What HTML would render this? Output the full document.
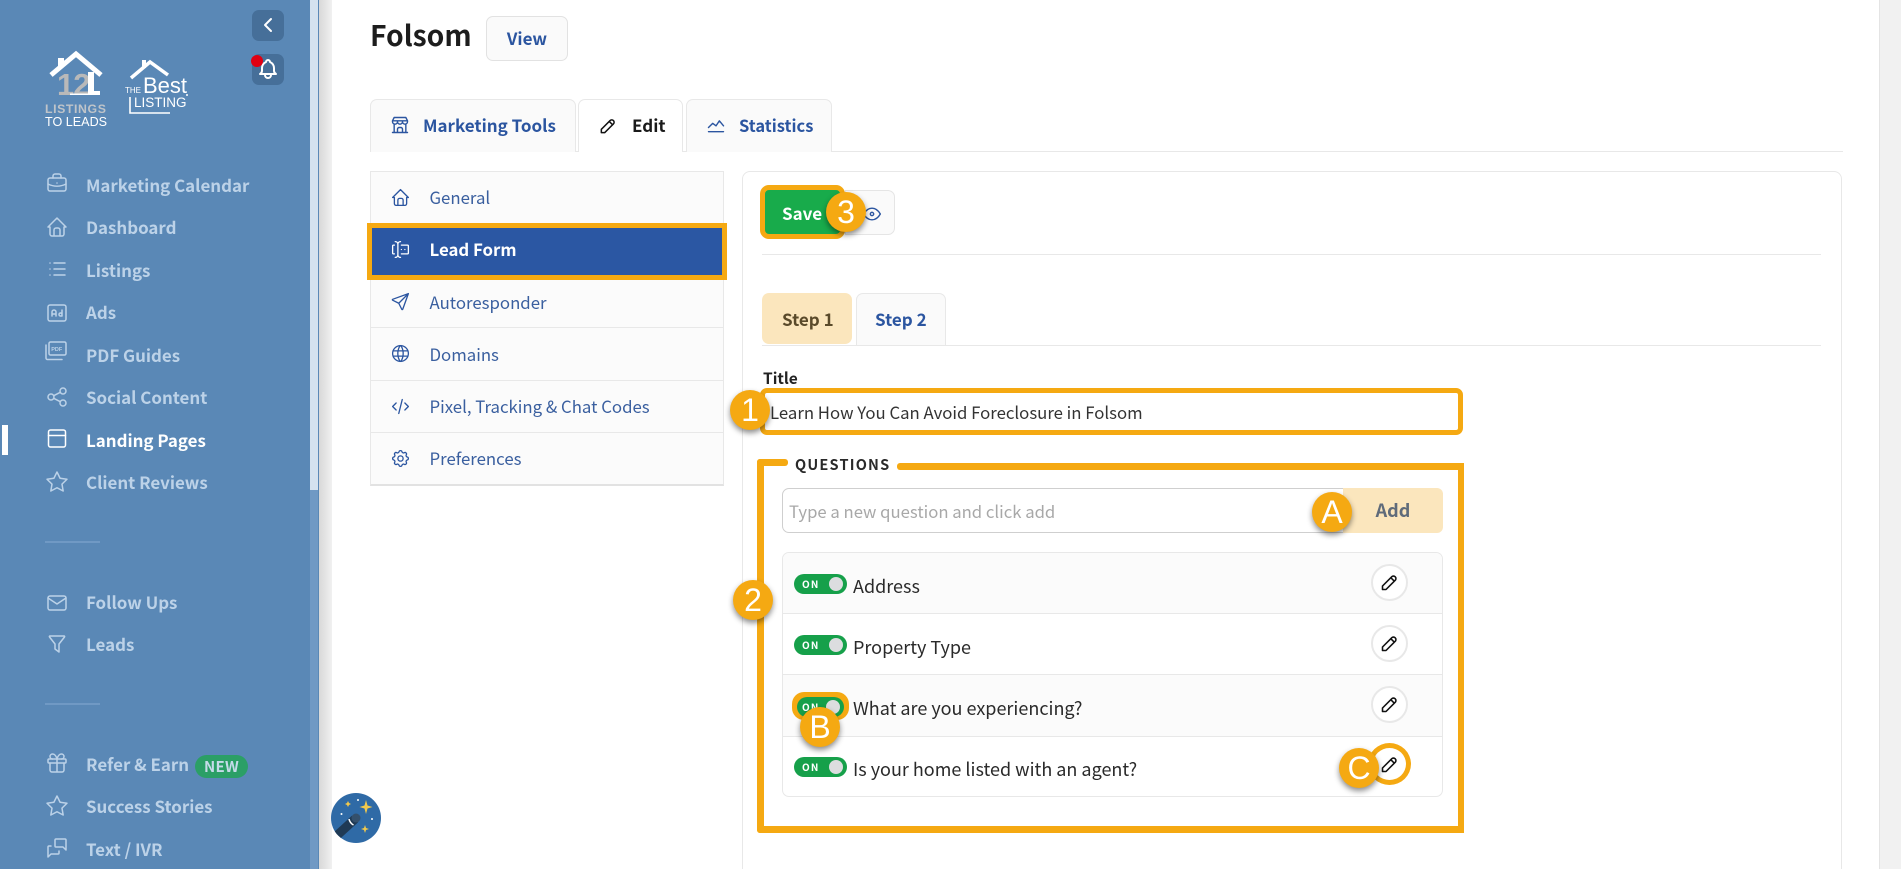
<!DOCTYPE html>
<html lang="en"><head><meta charset="utf-8"><title>Folsom</title>
<style>
html,body{margin:0;padding:0;width:1901px;height:869px;overflow:hidden;background:#fff}
body{position:relative;font-family:"Noto Sans CJK JP","Liberation Sans",sans-serif;color:#222}
div,span.a,svg.i{position:absolute;box-sizing:border-box}
.t{position:absolute;white-space:nowrap;line-height:24px;height:24px}
svg.i{fill:none;stroke:currentColor;stroke-width:1.5;stroke-linecap:round;stroke-linejoin:round}
.s{left:86px;font-size:16.9px;font-weight:700;color:#bcd2e8}
.si{left:45px;width:24px;height:24px;color:#bcd2e8}
.m{left:429.5px;font-size:16.8px;color:#3a5f9f}
.mi{left:390px;width:21px;height:21px;color:#2b55a0}
.line{background:#e8e8e8;height:1px}
.tab{background:#fafafa;border:1px solid #e8e8e8;border-bottom:0;border-radius:7px 7px 0 0}
.b{font-weight:700;color:#2b55a0;font-size:17px}
.badge{width:40px;height:40px;border-radius:50%;background:#f5a912;color:#fff;font-family:"Liberation Sans",sans-serif;font-size:32px;line-height:40px;text-align:center;box-shadow:0 3px 6px rgba(0,0,0,.45);z-index:5}
.tg{left:794px;width:53px;height:20px;border-radius:10px;background:#16a04a}
.tg b{position:absolute;left:8px;top:0;line-height:20px;font-size:10px;letter-spacing:1.2px;color:#fff;font-weight:700}
.tg i{position:absolute;right:4px;top:3px;width:14px;height:14px;border-radius:50%;background:#dcdddf}
.q{left:853px;font-size:18px;color:#2a2a2a}
.ed{left:1371px;width:37px;height:37px;border-radius:50%;background:#fff;border:2px solid #e8e8e8}
.ed svg{left:6px;top:6px;width:21px;height:21px;color:#111;stroke-width:1.8}
.or{background:#f5a912}
</style></head><body>

<!-- sidebar -->
<div style="left:0;top:0;width:310px;height:869px;background:#5a88b6"></div>
<div style="left:310px;top:0;width:8px;height:490px;background:#d4e2ef"></div>
<div style="left:310px;top:490px;width:8px;height:379px;background:#7099c4"></div>
<div style="left:318px;top:0;width:1px;height:869px;background:#5a88b6"></div>
<div style="left:319px;top:0;width:13px;height:869px;background:linear-gradient(90deg,#d8d8d8,#f1f1f1)"></div>
<div style="left:2px;top:425px;width:6px;height:30px;background:#fff"></div>

<div style="left:252px;top:10px;width:32px;height:31px;border-radius:7px;background:#466f99"></div>
<svg class="i" style="left:256px;top:12px;width:24px;height:26px;color:#fff;stroke-width:2" viewBox="0 0 24 24"><path d="M15 6l-6 6 6 6"/></svg>
<div style="left:252px;top:54px;width:32px;height:31px;border-radius:7px;background:#466f99"></div>
<svg class="i" style="left:256px;top:57px;width:24px;height:24px;color:#fff;stroke-width:2" viewBox="0 0 24 24"><path d="M10 5a2 2 0 0 1 4 0 7 7 0 0 1 4 6v3a4 4 0 0 0 2 3H4a4 4 0 0 0 2-3v-3a7 7 0 0 1 4-6M9 17v1a3 3 0 0 0 6 0v-1"/></svg>
<div style="left:251px;top:55px;width:12px;height:12px;border-radius:50%;background:#e00012"></div>

<!-- logos -->
<svg style="position:absolute;left:40px;top:45px" width="160" height="90" viewBox="40 45 160 90">
<path d="M58 58h6v8h-6z" fill="#fff"/>
<text x="57" y="95" font-family="Liberation Sans" font-size="31" font-weight="700" letter-spacing="-1" fill="#b9b9b9">12</text>
<path d="M51 75l25-21 25 21" fill="none" stroke="#fff" stroke-width="5"/>
<path d="M88 72h6v19h6v4H70v-1.500h18z" fill="#fff"/>
<text x="45" y="113" font-family="Liberation Sans" font-size="12.3" font-weight="700" fill="#bfc4c9" letter-spacing=".6">LISTINGS</text>
<text x="45" y="126" font-family="Liberation Sans" font-size="12.6" fill="#fff">TO LEADS</text>
<path d="M142 60h4v8h-4z" fill="#fff"/>
<path d="M131 78l19-16 18 13" fill="none" stroke="#fff" stroke-width="3.500"/>
<text x="125" y="93" font-family="Liberation Sans" font-size="8" fill="#fff">THE</text>
<text x="143" y="93" font-family="Liberation Sans" font-size="22" fill="#fff">Best</text>
<text x="134" y="107" font-family="Liberation Sans" font-size="13.500" fill="#fff">LISTING</text>
<circle cx="187" cy="95" r="1" fill="#fff"/>
<path d="M130 97v16h40" fill="none" stroke="#fff" stroke-width="1.600"/>
</svg>

<!-- sidebar icons -->
<svg class="i si" style="top:171px" viewBox="0 0 24 24"><rect x="3" y="7" width="18" height="13" rx="2"/><path d="M8 7V5a2 2 0 0 1 2-2h4a2 2 0 0 1 2 2v2M12 12v.01M3 13a20 20 0 0 0 18 0"/></svg>
<svg class="i si" style="top:215px" viewBox="0 0 24 24"><path d="M5 12H3l9-9 9 9h-2M5 12v7a2 2 0 0 0 2 2h10a2 2 0 0 0 2-2v-7M9 21v-6a2 2 0 0 1 2-2h2a2 2 0 0 1 2 2v6"/></svg>
<svg class="i si" style="top:257px" viewBox="0 0 24 24"><path d="M9 6h11M9 12h11M9 18h11M5 6v.01M5 12v.01M5 18v.01"/></svg>
<svg class="i si" style="top:301px" viewBox="0 0 24 24"><rect x="3" y="4" width="18" height="16" rx="2"/><path d="M7 15v-4a2 2 0 0 1 4 0v4M7 13h4M17 9v6h-1.500a1.500 1.500 0 1 1 1.500-1.500"/></svg>
<svg class="i si" style="top:339px;left:44px" viewBox="0 0 24 24"><rect x="5" y="3" width="17" height="13" rx="1.500"/><path d="M2 6v13a1.500 1.500 0 0 0 1.500 1.500H18"/><text x="7.200" y="12" font-family="Liberation Sans" font-size="5.500" font-weight="700" fill="#bcd2e8" stroke="none">PDF</text></svg>
<svg class="i si" style="top:385px" viewBox="0 0 24 24"><circle cx="6" cy="12" r="3"/><circle cx="18" cy="6" r="3"/><circle cx="18" cy="18" r="3"/><path d="M8.700 10.700l6.600-3.400M8.700 13.300l6.600 3.400"/></svg>
<svg class="i si" style="top:427px;color:#fff" viewBox="0 0 24 24"><rect x="3.500" y="3" width="17" height="17" rx="2"/><path d="M3.500 8.500h17"/></svg>
<svg class="i si" style="top:470px" viewBox="0 0 24 24"><path d="M12 17.750l-6.172 3.245 1.179-6.873-5-4.867 6.900-1 3.086-6.253 3.086 6.253 6.900 1-5 4.867 1.179 6.873z"/></svg>
<svg class="i si" style="top:591px" viewBox="0 0 24 24"><rect x="3" y="5" width="18" height="14" rx="2"/><path d="M3 7l9 6 9-6"/></svg>
<svg class="i si" style="top:632px" viewBox="0 0 24 24"><path d="M5 4h14a.6.6 0 0 1 .5 1L14 12v8l-4-3v-5L4.500 5a.6.6 0 0 1 .5-1z"/></svg>
<svg class="i si" style="top:751px" viewBox="0 0 24 24"><rect x="3" y="8" width="18" height="4" rx="1"/><path d="M12 8v13M19 12v7a2 2 0 0 1-2 2H7a2 2 0 0 1-2-2v-7M7.500 8a2.500 2.500 0 0 1 0-5A4.800 8 0 0 1 12 8a4.800 8 0 0 1 4.500-5 2.500 2.500 0 0 1 0 5"/></svg>
<svg class="i si" style="top:794px" viewBox="0 0 24 24"><path d="M12 17.750l-6.172 3.245 1.179-6.873-5-4.867 6.900-1 3.086-6.253 3.086 6.253 6.900 1-5 4.867 1.179 6.873z"/></svg>
<svg class="i si" style="top:836px" viewBox="0 0 24 24"><path d="M21 14l-3-3h-7a1 1 0 0 1-1-1V4a1 1 0 0 1 1-1h9a1 1 0 0 1 1 1v10M14 15v2a1 1 0 0 1-1 1H6l-3 3V11a1 1 0 0 1 1-1h2"/></svg>

<span class="t s" style="top:173px">Marketing Calendar</span>
<span class="t s" style="top:215px">Dashboard</span>
<span class="t s" style="top:258px">Listings</span>
<span class="t s" style="top:300px">Ads</span>
<span class="t s" style="top:343px">PDF Guides</span>
<span class="t s" style="top:385px">Social Content</span>
<span class="t s" style="top:428px;color:#fff">Landing Pages</span>
<span class="t s" style="top:470px">Client Reviews</span>
<div style="left:45px;top:541px;width:55px;height:2px;background:#7099c4"></div>
<span class="t s" style="top:590px">Follow Ups</span>
<span class="t s" style="top:632px">Leads</span>
<div style="left:45px;top:703px;width:55px;height:2px;background:#7099c4"></div>
<span class="t s" style="top:752px">Refer &amp; Earn</span>
<div style="left:195px;top:755px;width:53px;height:23px;border-radius:12px;background:#2b9f66;color:#c5dbe9;font-size:15px;font-weight:700;line-height:23px;text-align:center;letter-spacing:.3px">NEW</div>
<span class="t s" style="top:794px">Success Stories</span>
<span class="t s" style="top:837px">Text / IVR</span>

<!-- wand -->
<svg style="position:absolute;left:331px;top:793px" width="50" height="50" viewBox="0 0 50 50">
<defs><clipPath id="wc"><circle cx="25" cy="25" r="25"/></clipPath></defs>
<circle cx="25" cy="25" r="25" fill="#2f6aa6"/>
<path d="M2 46L24 26" stroke="#1f3a55" stroke-width="9" clip-path="url(#wc)"/>
<circle cx="25" cy="25" r="4.500" fill="#34506c"/>
<path d="M18 26a9 9 0 0 0 4.500 6" fill="none" stroke="#fff" stroke-width="1.500"/>
<path d="M35 7l1.500 5.500 5 1.500-5 1.500-1.500 5.500-1.500-5.500-5-1.500 5-1.500z" fill="#f2c94c"/>
<path d="M17 8l1 2 2 1-2 1-1 2-1-2-2-1 2-1z" fill="#f2c94c"/>
<path d="M34 32l1 3 3 1-3 1-1 3-1-3-3-1 3-1z" fill="#f2c94c"/>
<circle cx="27" cy="7" r="1" fill="#fff"/><circle cx="10.500" cy="21" r="1" fill="#fff"/><circle cx="41" cy="26" r="1" fill="#fff"/>
</svg>

<!-- right scrollbar -->
<div style="left:1879px;top:0;width:22px;height:869px;background:#f1f1f1;border-left:1px solid #e4e4e4"></div>

<!-- header -->
<span class="t" style="left:370px;top:18px;font-size:28.3px;line-height:34px;height:34px;font-weight:700;color:#1d1d1d">Folsom</span>
<div style="left:486px;top:16px;width:82px;height:45px;border:1px solid #e2e2e2;border-radius:7px;background:#fafafa;text-align:center;line-height:41px" class="b">View</div>

<!-- main tabs -->
<div class="line" style="left:370px;top:151px;width:1473px"></div>
<div class="tab" style="left:370px;top:99px;width:206px;height:53px"></div>
<div class="tab" style="left:578px;top:99px;width:105px;height:53px;background:#fff"></div>
<div class="tab" style="left:686px;top:99px;width:146px;height:53px"></div>
<svg class="i" style="left:390px;top:115px;width:20px;height:20px;color:#2b55a0;stroke-width:1.700" viewBox="0 0 24 24"><path d="M3 21h18M3 7v1a3 3 0 0 0 6 0V7m0 1a3 3 0 0 0 6 0V7m0 1a3 3 0 0 0 6 0V7H3l2-4h14l2 4M5 21V10.850M19 21V10.850M9 21v-4a2 2 0 0 1 2-2h2a2 2 0 0 1 2 2v4"/></svg>
<span class="t b" style="left:423px;top:113px">Marketing Tools</span>
<svg class="i" style="left:598px;top:116px;width:20px;height:20px;color:#111;stroke-width:1.800" viewBox="0 0 24 24"><path d="M4 20h4L18.500 9.500a1.500 1.500 0 0 0-4-4L4 16v4M13.500 6.500l4 4"/></svg>
<span class="t b" style="left:632px;top:113px;color:#1a1a1a">Edit</span>
<svg class="i" style="left:706px;top:115px;width:20px;height:20px;color:#2b55a0;stroke-width:1.700" viewBox="0 0 24 24"><path d="M3 20h18M3 15l5-5 4 3 4-6 5 6"/></svg>
<span class="t b" style="left:739px;top:113px;font-size:16.500px">Statistics</span>

<!-- left menu -->
<div style="left:370px;top:171px;width:354px;height:315px;background:#fbfbfb;border:1px solid #e8e8e8;border-bottom:2px solid #e2e2e2"></div>
<div class="line" style="left:371px;top:327px;width:352px"></div>
<div class="line" style="left:371px;top:380px;width:352px"></div>
<div class="line" style="left:371px;top:432px;width:352px"></div>
<div style="left:367px;top:223px;width:360px;height:57px;background:#2b57a3;border:5px solid #f5a912"></div>
<svg class="i mi" style="top:187px" viewBox="0 0 24 24"><path d="M5 12H3l9-9 9 9h-2M5 12v7a2 2 0 0 0 2 2h10a2 2 0 0 0 2-2v-7M9 21v-6a2 2 0 0 1 2-2h2a2 2 0 0 1 2 2v6"/></svg>
<svg class="i mi" style="top:239px;color:#fff" viewBox="0 0 24 24"><path d="M12 3a3 3 0 0 0-3 3v12a3 3 0 0 0 3 3M6 3a3 3 0 0 1 3 3v12a3 3 0 0 1-3 3M13 7h7a1 1 0 0 1 1 1v8a1 1 0 0 1-1 1h-7M5 7H4a1 1 0 0 0-1 1v8a1 1 0 0 0 1 1h1M17 12h.01M13 12h.01"/></svg>
<svg class="i mi" style="top:291px" viewBox="0 0 24 24"><path d="M10 14L21 3M21 3l-6.500 18a.55.55 0 0 1-1 0L10 14l-7-3.500a.55.55 0 0 1 0-1L21 3"/></svg>
<svg class="i mi" style="top:343px" viewBox="0 0 24 24"><circle cx="12" cy="12" r="9"/><path d="M3.600 9h16.800M3.600 15h16.800M11.500 3a17 17 0 0 0 0 18M12.500 3a17 17 0 0 1 0 18"/></svg>
<svg class="i mi" style="top:396px" viewBox="0 0 24 24"><path d="M7 8l-4 4 4 4M17 8l4 4-4 4M14 4l-4 16"/></svg>
<svg class="i mi" style="top:448px" viewBox="0 0 24 24"><path d="M10.325 4.317c.426-1.756 2.924-1.756 3.350 0a1.724 1.724 0 0 0 2.573 1.066c1.543-.94 3.310.826 2.370 2.370a1.724 1.724 0 0 0 1.065 2.572c1.756.426 1.756 2.924 0 3.350a1.724 1.724 0 0 0-1.066 2.573c.94 1.543-.826 3.310-2.370 2.370a1.724 1.724 0 0 0-2.572 1.065c-.426 1.756-2.924 1.756-3.350 0a1.724 1.724 0 0 0-2.573-1.066c-1.543.94-3.310-.826-2.370-2.370a1.724 1.724 0 0 0-1.065-2.572c-1.756-.426-1.756-2.924 0-3.350a1.724 1.724 0 0 0 1.066-2.573c-.94-1.543.826-3.310 2.370-2.370 1 .608 2.296.07 2.572-1.065z"/><circle cx="12" cy="12" r="3"/></svg>
<span class="t m" style="top:185px">General</span>
<span class="t m" style="top:237px;color:#fff;font-weight:700">Lead Form</span>
<span class="t m" style="top:290px">Autoresponder</span>
<span class="t m" style="top:342px">Domains</span>
<span class="t m" style="top:394px">Pixel, Tracking &amp; Chat Codes</span>
<span class="t m" style="top:446px">Preferences</span>

<!-- right panel -->
<div style="left:742px;top:171px;width:1100px;height:720px;border:1px solid #e8e8e8;border-radius:8px;background:#fff"></div>
<div style="left:845px;top:190px;width:50px;height:45px;border:1px solid #e5e5e5;border-radius:0 7px 7px 0;background:#fafafa"></div>
<svg class="i" style="left:862px;top:204px;width:20px;height:20px;color:#2b55a0;stroke-width:1.700" viewBox="0 0 24 24"><circle cx="12" cy="12" r="2"/><path d="M22 12c-2.667 4.667-6 7-10 7s-7.333-2.333-10-7c2.667-4.667 6-7 10-7s7.333 2.333 10 7"/></svg>
<div style="left:760px;top:185px;width:85px;height:54px;background:#18ab4b;border:5px solid #f5a912;border-radius:9px"></div>
<span class="t" style="left:782px;top:201px;font-size:17px;font-weight:700;color:#fff">Save</span>
<div class="line" style="left:762px;top:254px;width:1059px"></div>

<div class="line" style="left:762px;top:345px;width:1059px"></div>
<div style="left:762px;top:293px;width:90px;height:51px;background:#fbe6bd;border-radius:7px"></div>
<span class="t" style="left:782px;top:307px;font-size:17px;font-weight:700;color:#5a4a2a">Step 1</span>
<div class="tab" style="left:856px;top:293px;width:90px;height:52px"></div>
<span class="t b" style="left:875px;top:307px">Step 2</span>

<span class="t" style="left:763px;top:366px;font-size:15.500px;font-weight:700;color:#222">Title</span>
<div style="left:760px;top:388px;width:703px;height:47px;border:5px solid #f5a912;border-radius:7px;background:#fff"></div>
<span class="t" style="left:770px;top:400px;font-size:16.750px;color:#333">Learn How You Can Avoid Foreclosure in Folsom</span>

<!-- questions annotation -->
<div class="or" style="left:757px;top:459px;width:31px;height:7px;border-radius:3px"></div>
<div class="or" style="left:897px;top:463px;width:567px;height:7px;border-radius:3px"></div>
<div class="or" style="left:757px;top:459px;width:7px;height:374px;border-radius:3px"></div>
<div class="or" style="left:1458px;top:463px;width:6px;height:370px"></div>
<div class="or" style="left:757px;top:826px;width:707px;height:7px;border-radius:3px"></div>
<span class="t" style="left:795px;top:453px;font-size:14.500px;font-weight:700;letter-spacing:1.200px;color:#2a2a2a">QUESTIONS</span>

<div style="left:782px;top:488px;width:565px;height:45px;border:1px solid #cfcfcf;border-radius:7px 0 0 7px;background:#fff"></div>
<span class="t" style="left:789px;top:499px;font-size:16.700px;color:#a8a8a8">Type a new question and click add</span>
<div style="left:1343px;top:488px;width:100px;height:45px;background:#fbe6bd;border-radius:0 6px 6px 0;text-align:center;line-height:44px;font-size:18px;font-weight:700;color:#5f6b7a">Add</div>

<div style="left:782px;top:552px;width:661px;height:245px;border:1px solid #e8e8e8;border-radius:7px;background:#fff;overflow:hidden">
<div style="left:0;top:0;width:100%;height:61px;background:#fbfbfb"></div>
<div style="left:0;top:122px;width:100%;height:61px;background:#fbfbfb"></div>
<div class="line" style="left:0;top:60px;width:100%"></div>
<div class="line" style="left:0;top:121px;width:100%"></div>
<div class="line" style="left:0;top:183px;width:100%"></div>
</div>

<div class="tg" style="top:574px"><b>ON</b><i></i></div>
<div class="tg" style="top:635px"><b>ON</b><i></i></div>
<div style="left:792px;top:692px;width:57px;height:28px;border-radius:12px;background:#f5a912"></div>
<div class="tg" style="top:697px;left:797px;width:47px"><b style="left:5px">ON</b><i></i></div>
<div class="tg" style="top:757px"><b>ON</b><i></i></div>
<span class="t q" style="top:574px">Address</span>
<span class="t q" style="top:635px">Property Type</span>
<span class="t q" style="top:696px">What are you experiencing?</span>
<span class="t q" style="top:757px">Is your home listed with an agent?</span>

<div class="ed" style="top:564px"><svg class="i" viewBox="0 0 24 24"><path d="M4 20h4L18.500 9.500a1.500 1.500 0 0 0-4-4L4 16v4M13.500 6.500l4 4"/></svg></div>
<div class="ed" style="top:625px"><svg class="i" viewBox="0 0 24 24"><path d="M4 20h4L18.500 9.500a1.500 1.500 0 0 0-4-4L4 16v4M13.500 6.500l4 4"/></svg></div>
<div class="ed" style="top:686px"><svg class="i" viewBox="0 0 24 24"><path d="M4 20h4L18.500 9.500a1.500 1.500 0 0 0-4-4L4 16v4M13.500 6.500l4 4"/></svg></div>
<div class="ed" style="left:1368px;top:743px;width:43px;height:42px;border:5px solid #f5a912"><svg class="i" style="left:6px;top:6px" viewBox="0 0 24 24"><path d="M4 20h4L18.500 9.500a1.500 1.500 0 0 0-4-4L4 16v4M13.500 6.500l4 4"/></svg></div>

<!-- badges -->
<div class="badge" style="left:826px;top:192px">3</div>
<div class="badge" style="left:730px;top:390px">1</div>
<div class="badge" style="left:733px;top:580px">2</div>
<div class="badge" style="left:1312px;top:492px">A</div>
<div class="badge" style="left:800px;top:707px">B</div>
<div class="badge" style="left:1339px;top:748px">C</div>
</body></html>
